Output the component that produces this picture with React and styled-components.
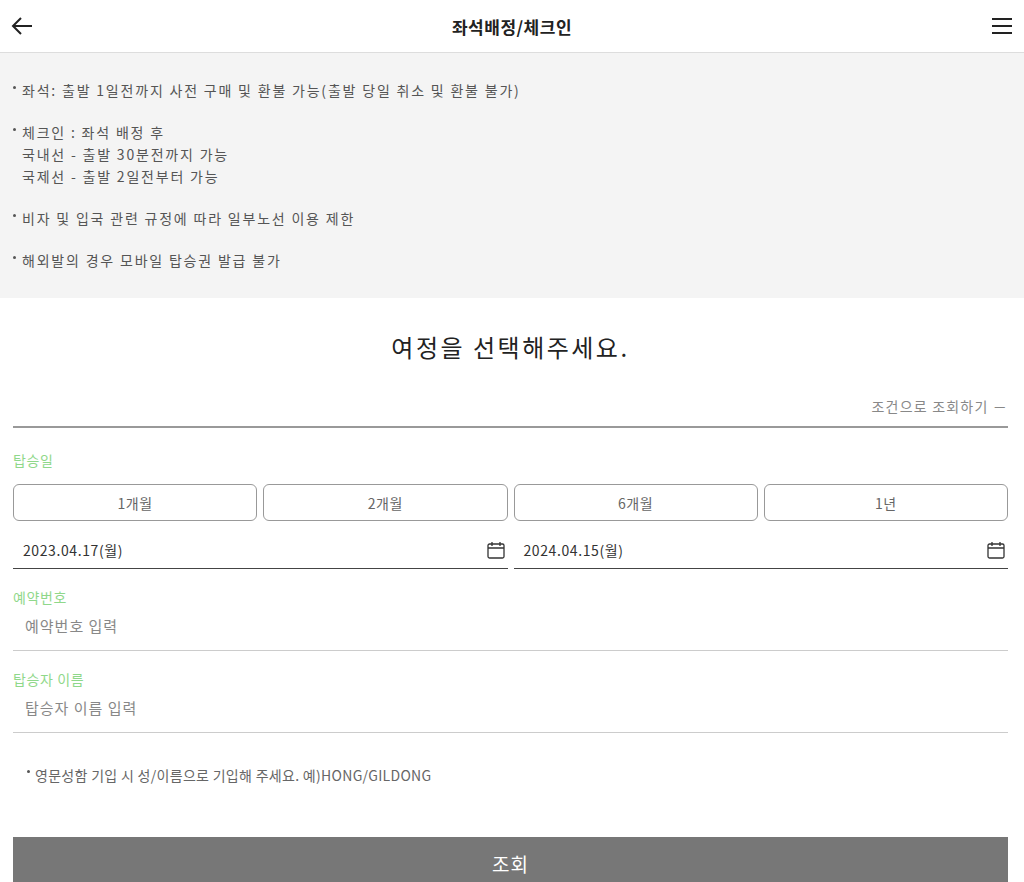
import React from "react";
import styled, { createGlobalStyle } from "styled-components";

const G = createGlobalStyle`
  body{margin:0;font-family:"Noto Sans CJK KR","Noto Sans",sans-serif;background:#fff;color:#222;letter-spacing:0.6px;}
  *{box-sizing:border-box;}
`;
const Header = styled.header`
  height:53px;display:flex;align-items:center;justify-content:space-between;padding:0 10px;border-bottom:1px solid #ddd;
`;
const Title = styled.h1`font-size:17px;font-weight:700;margin:0;color:#222;letter-spacing:0.5px;`;
const IconBtn = styled.button`background:none;border:0;padding:0;display:flex;width:24px;height:24px;`;
const Notice = styled.ul`
  background:#f4f4f4;margin:0;padding:26px 12px 27px;list-style:none;font-size:14px;color:#555;line-height:22px;letter-spacing:1.8px;
`;
const Item = styled.li`
  padding-left:10px;position:relative;margin-bottom:20px;white-space:pre-line;
  &:last-child{margin-bottom:0;}
  &::before{content:"";position:absolute;left:1px;top:7px;width:3px;height:3px;background:#555;border-radius:50%;}
`;
const Main = styled.main`padding:0 16px 0 13px;`;
const Heading = styled.h2`text-align:center;font-size:24px;font-weight:400;margin:31px 0 24px;color:#222;letter-spacing:2.5px;`;
const Toggle = styled.div`
  text-align:right;font-size:14px;color:#888;padding:8px 0 10px;border-bottom:2px solid #999;letter-spacing:1.2px;
`;
const Label = styled.div`color:#8fd88a;font-size:14px;margin:22px 0 14px;`;
const Periods = styled.div`display:grid;grid-template-columns:repeat(4,1fr);gap:6px;`;
const Period = styled.button`
  height:37px;border:1px solid #999;border-radius:6px;background:#fff;color:#666;font-family:inherit;font-size:14px;letter-spacing:0.6px;
`;
const Dates = styled.div`display:grid;grid-template-columns:1fr 1fr;gap:6px;margin-top:10px;`;
const DateField = styled.div`
  height:38px;display:flex;align-items:center;justify-content:space-between;padding:0 2px 0 10px;border-bottom:1px solid #444;font-size:14px;color:#333;
`;
const Input = styled.input`
  width:100%;border:0;border-bottom:1px solid #ccc;padding:8px 12px 14px;font-size:15px;font-family:inherit;outline:none;letter-spacing:1px;
  &::placeholder{color:#888;}
`;
const Field = styled.div`& ${Label}{margin:18px 0 0;}`;
const Note = styled.p`font-size:14px;color:#666;margin:32px 0 0 22px;position:relative;letter-spacing:0.3px;
  &::before{content:"";position:absolute;left:-8px;top:5px;width:3px;height:3px;border-radius:50%;background:#555;}`;
const Submit = styled.button`
  width:100%;height:53px;margin-top:52px;background:#777;color:#fff;border:0;font-size:19px;font-family:inherit;letter-spacing:1px;
`;

const Cal = () => (
  <svg width="20" height="20" viewBox="0 0 20 20" fill="none" stroke="#333" strokeWidth="1.3">
    <rect x="2" y="4" width="16" height="14" rx="1.5" /><path d="M2 8h16M6 2v4M14 2v4" />
  </svg>
);

export default function App() {
  return (
    <>
      <G />
      <Header>
        <IconBtn><svg width="24" height="24" viewBox="0 0 24 24" fill="none" stroke="#222" strokeWidth="2"><path d="M22 12H3M11 4l-8 8 8 8" /></svg></IconBtn>
        <Title>좌석배정/체크인</Title>
        <IconBtn><svg width="24" height="24" viewBox="0 0 24 24" stroke="#222" strokeWidth="2"><path d="M2 5h20M2 12h20M2 19h20" /></svg></IconBtn>
      </Header>
      <Notice>
        <Item>좌석: 출발 1일전까지 사전 구매 및 환불 가능(출발 당일 취소 및 환불 불가)</Item>
        <Item>{"체크인 : 좌석 배정 후\n국내선 - 출발 30분전까지 가능\n국제선 - 출발 2일전부터 가능"}</Item>
        <Item>비자 및 입국 관련 규정에 따라 일부노선 이용 제한</Item>
        <Item>해외발의 경우 모바일 탑승권 발급 불가</Item>
      </Notice>
      <Main>
        <Heading>여정을 선택해주세요.</Heading>
        <Toggle>조건으로 조회하기 －</Toggle>
        <Label>탑승일</Label>
        <Periods>
          {["1개월", "2개월", "6개월", "1년"].map(p => <Period key={p}>{p}</Period>)}
        </Periods>
        <Dates>
          <DateField>2023.04.17(월)<Cal /></DateField>
          <DateField>2024.04.15(월)<Cal /></DateField>
        </Dates>
        <Field><Label>예약번호</Label><Input placeholder="예약번호 입력" /></Field>
        <Field><Label>탑승자 이름</Label><Input placeholder="탑승자 이름 입력" /></Field>
        <Note>영문성함 기입 시 성/이름으로 기입해 주세요. 예)HONG/GILDONG</Note>
        <Submit>조회</Submit>
      </Main>
    </>
  );
}
